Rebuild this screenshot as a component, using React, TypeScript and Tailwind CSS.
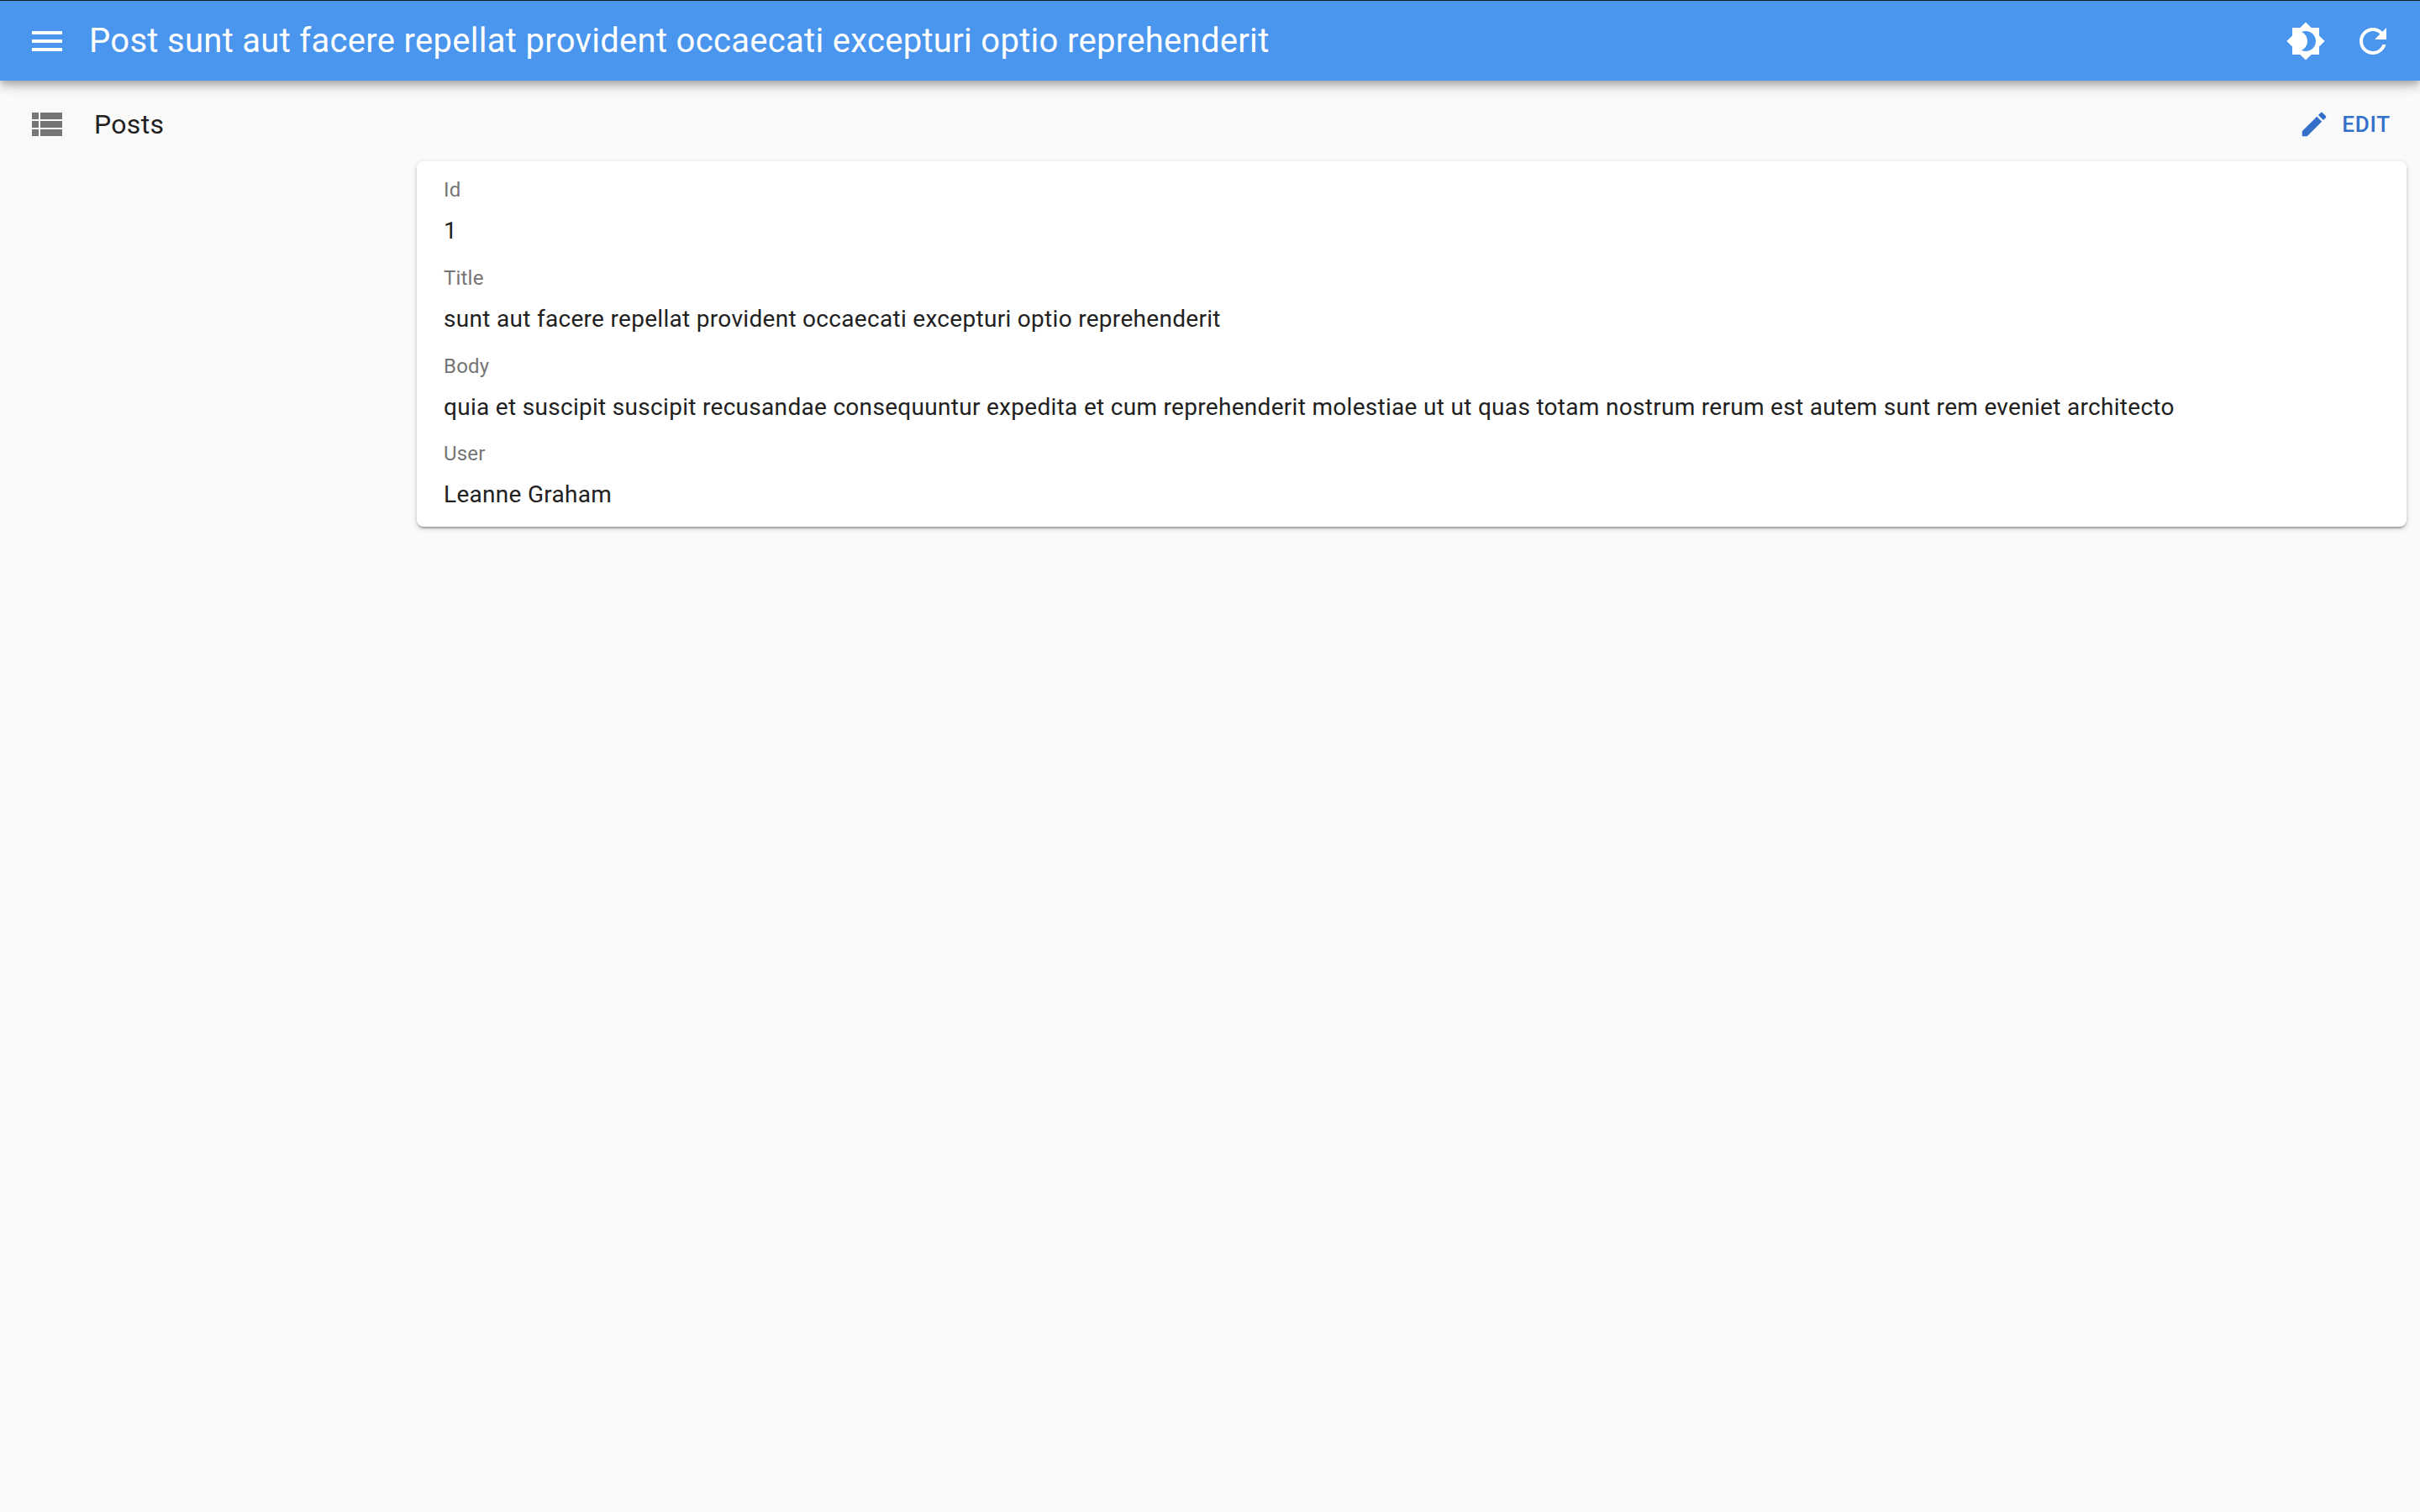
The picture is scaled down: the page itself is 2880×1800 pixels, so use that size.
const Icon = ({ d, className }: { d: string; className: string }) => (
  <svg viewBox="0 0 24 24" fill="currentColor" className={className}>
    <path d={d} />
  </svg>
);

const menu = "M3 18h18v-2H3v2zm0-5h18v-2H3v2zm0-7v2h18V6H3z";
const viewList = "M3 14h4v-4H3v4zm0 5h4v-4H3v4zM3 9h4V5H3v4zm5 5h13v-4H8v4zm0 5h13v-4H8v4zM8 5v4h13V5H8z";
const brightness = "M20 8.69V4h-4.69L12 .69 8.69 4H4v4.69L.69 12 4 15.31V20h4.69L12 23.31 15.31 20H20v-4.69L23.31 12 20 8.69zM12 18c-.89 0-1.74-.2-2.5-.55C11.56 16.5 13 14.42 13 12s-1.44-4.5-3.5-5.45C10.26 6.2 11.11 6 12 6c3.31 0 6 2.69 6 6s-2.69 6-6 6z";
const refresh = "M17.65 6.35C16.2 4.9 14.21 4 12 4c-4.42 0-7.99 3.58-7.99 8s3.57 8 7.99 8c3.73 0 6.84-2.55 7.73-6h-2.08c-.82 2.33-3.04 4-5.65 4-3.31 0-6-2.69-6-6s2.69-6 6-6c1.66 0 3.14.69 4.22 1.78L13 11h7V4l-2.35 2.35z";
const create = "M3 17.25V21h3.75L17.81 9.94l-3.75-3.75L3 17.25zM20.71 7.04c.39-.39.39-1.02 0-1.41l-2.34-2.34c-.39-.39-1.02-.39-1.41 0l-1.83 1.83 3.75 3.75 1.83-1.83z";

const fields = [
  ["Id", "1"],
  ["Title", "sunt aut facere repellat provident occaecati excepturi optio reprehenderit"],
  ["Body", "quia et suscipit suscipit recusandae consequuntur expedita et cum reprehenderit molestiae ut ut quas totam nostrum rerum est autem sunt rem eveniet architecto"],
  ["User", "Leanne Graham"],
];

export default function App() {
  return (
    <div className="min-h-[1800px] bg-[#fafafa] font-['Roboto',sans-serif] text-[#212121]">
      <header className="relative z-10 flex h-[96px] items-center border-t border-[#1a1a1a] bg-[#4a95ed] px-[16px] text-white shadow-[0_4px_8px_-2px_rgba(0,0,0,0.2),0_8px_10px_0_rgba(0,0,0,0.14),0_2px_20px_0_rgba(0,0,0,0.12)]">
        <div className="flex h-[80px] w-[80px] items-center justify-center">
          <Icon d={menu} className="h-[48px] w-[48px]" />
        </div>
        <h1 className="ml-[10px] flex-1 text-[40px] leading-[48px] font-normal tracking-[0.3px]">
          Post sunt aut facere repellat provident occaecati excepturi optio reprehenderit
        </h1>
        <div className="flex h-[80px] w-[80px] items-center justify-center">
          <Icon d={brightness} className="h-[48px] w-[48px]" />
        </div>
        <div className="flex h-[80px] w-[80px] items-center justify-center">
          <Icon d={refresh} className="h-[48px] w-[48px]" />
        </div>
      </header>
      <div className="flex h-[96px] items-center pt-[8px] pl-[32px] pr-[35px]">
        <Icon d={viewList} className="h-[48px] w-[48px] text-[#757575]" />
        <span className="ml-[32px] flex-1 text-[32px] leading-[48px] tracking-[0.3px]">Posts</span>
        <div className="flex items-center text-[#3470c9]">
          <Icon d={create} className="h-[38px] w-[38px]" />
          <span className="ml-[14px] text-[26px] font-medium tracking-[0.8px]">EDIT</span>
        </div>
      </div>
      <div className="ml-[496px] mr-[16px] rounded-[8px] bg-white py-[8px] px-[32px] shadow-[0_2px_6px_0_rgba(0,0,0,0.2),0_2px_2px_0_rgba(0,0,0,0.14),0_4px_2px_-2px_rgba(0,0,0,0.12)]">
        {fields.map(([label, value]) => (
          <div key={label} className="h-[104.75px] pt-[8px]">
            <div className="text-[24px] leading-[36px] tracking-[0.2px] text-[#757575]">{label}</div>
            <div className="mt-[9px] text-[28px] leading-[44px] tracking-[0.3px]">{value}</div>
          </div>
        ))}
      </div>
    </div>
  );
}
